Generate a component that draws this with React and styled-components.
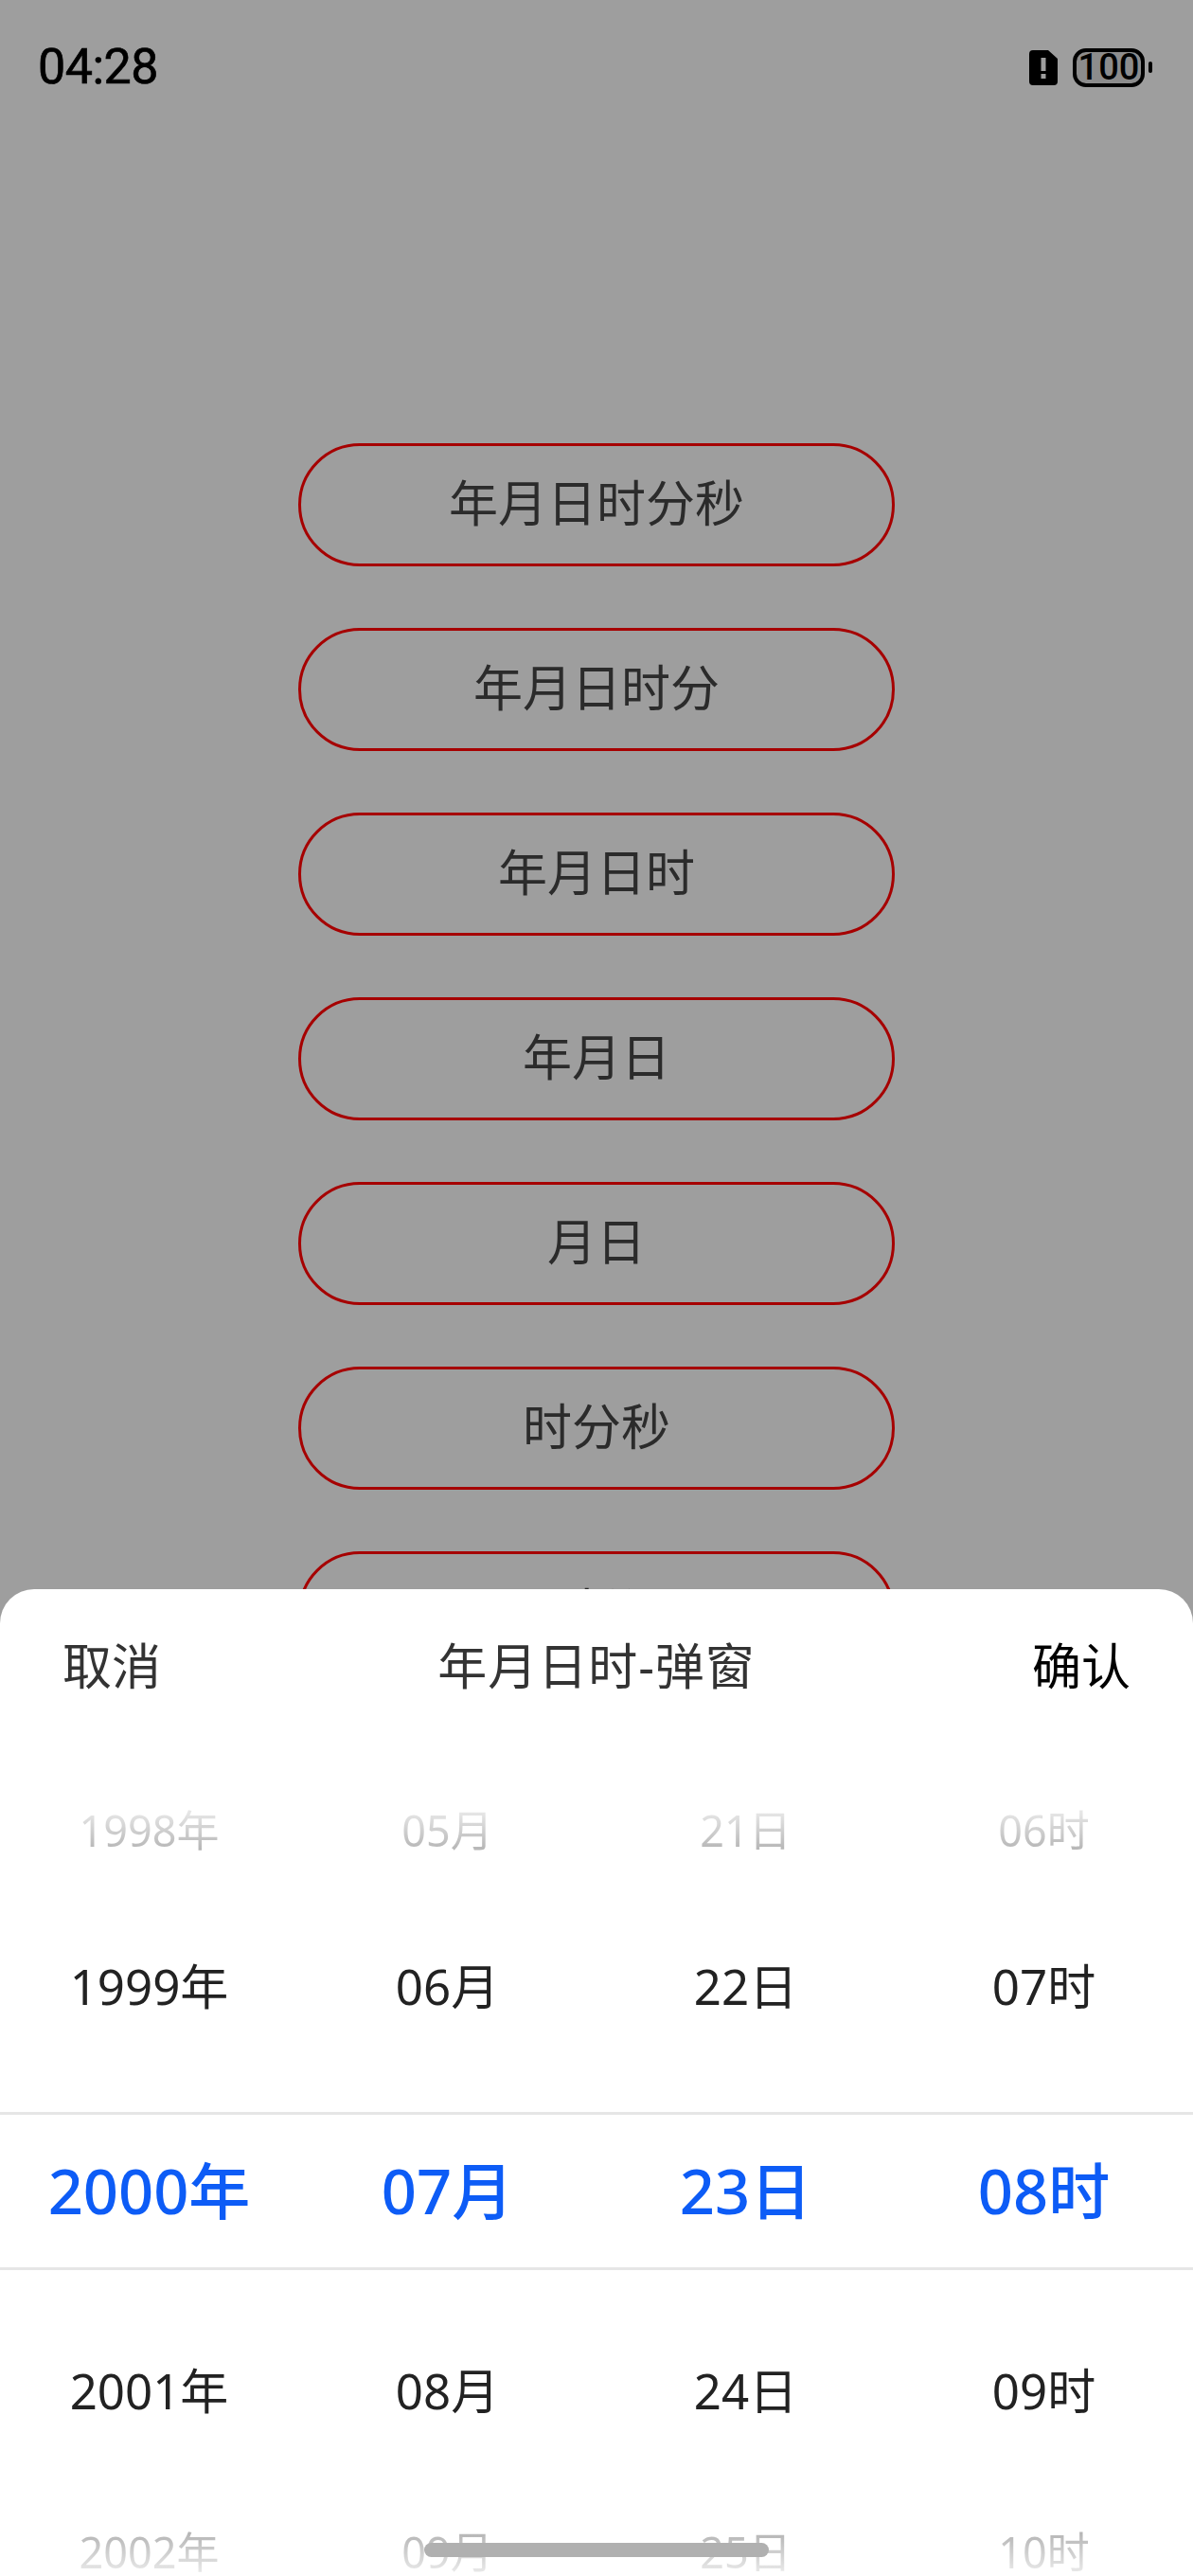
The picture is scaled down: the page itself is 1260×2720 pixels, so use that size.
import React from "react";
import styled, { createGlobalStyle } from "styled-components";

const GlobalStyle = createGlobalStyle`
  html, body {
    margin: 0;
    padding: 0;
    background: #9e9e9e;
  }
  * {
    box-sizing: border-box;
  }
`;

const FONT = `"Noto Sans", "Noto Sans CJK SC", sans-serif`;

const Page = styled.div`
  position: relative;
  width: 1260px;
  height: 2720px;
  overflow: hidden;
  background: #9e9e9e;
  font-family: ${FONT};
`;

const StatusBar = styled.div`
  display: flex;
  align-items: center;
  justify-content: space-between;
  height: 142px;
  padding: 0 43px 0 40px;
`;

const Clock = styled.div`
  font-family: Roboto, sans-serif;
  font-size: 52px;
  font-weight: 400;
  line-height: 1;
  letter-spacing: -0.5px;
  color: #000;
  -webkit-text-stroke: 0.7px #000;
`;

const StatusIcons = styled.div`
  display: flex;
  align-items: center;
  gap: 16px;
`;

const Battery = styled.div`
  display: flex;
  align-items: center;
  justify-content: center;
  width: 76px;
  height: 41px;
  border: 4px solid #000;
  border-radius: 14px;
  background: #8c8c8c;
  font-family: Roboto, sans-serif;
  font-size: 38px;
  font-weight: 500;
  line-height: 1;
  color: #000;
`;

const BatteryWrap = styled.div`
  display: flex;
  align-items: center;
  gap: 4px;
`;

const BatteryNub = styled.div`
  width: 4px;
  height: 12px;
  border-radius: 2px;
  background: #000;
`;

const ButtonList = styled.div`
  display: flex;
  flex-direction: column;
  align-items: center;
  gap: 65px;
  padding-top: 326px;
`;

const ModeButton = styled.div`
  display: flex;
  align-items: center;
  justify-content: center;
  flex: none;
  width: 630px;
  height: 130px;
  padding-bottom: 4px;
  border: 3px solid #a60000;
  border-radius: 65px;
  font-size: 52px;
  line-height: 1;
  color: #2b2b2b;
`;

const Sheet = styled.div`
  position: absolute;
  left: 0;
  right: 0;
  bottom: 0;
  height: 1042px;
  border-radius: 36px 36px 0 0;
  background: #fff;
`;

const SheetHeader = styled.div`
  display: flex;
  align-items: center;
  justify-content: space-between;
  height: 162px;
  padding: 0 66px;
  font-size: 52px;
  line-height: 1;
`;

const HeaderAction = styled.div`
  color: ${(p) => (p.$primary ? "#000" : "#333")};
`;

const HeaderTitle = styled.div`
  letter-spacing: 1px;
  color: #333;
`;

const Wheels = styled.div`
  display: grid;
  grid-template-columns: repeat(4, 1fr);
  padding-top: 10px;
`;

const Wheel = styled.div`
  display: flex;
  flex-direction: column;
`;

const Cell = styled.div`
  display: flex;
  align-items: center;
  justify-content: center;
  flex: none;
  height: 165px;
  padding-bottom: ${(p) => (p.$raised ? "10px" : "0")};
  line-height: 1;
  font-size: 51px;
  color: #222;

  ${(p) =>
    p.$selected &&
    `
    height: 167px;
    margin: 50px 0;
    border-top: 3px solid #e6e6e6;
    border-bottom: 3px solid #e6e6e6;
    font-size: 65px;
    font-weight: 500;
    color: #0d5cf6;
  `}
`;

const FadedText = styled.span`
  font-size: 45px;
  line-height: 1.2;
  color: transparent;
  background: linear-gradient(
    ${(p) => (p.$top ? "to bottom" : "to top")},
    #e6e6e6 15%,
    #b4b4b4 90%
  );
  -webkit-background-clip: text;
  background-clip: text;
`;

const HomeIndicator = styled.div`
  position: absolute;
  left: 448px;
  bottom: 20px;
  width: 364px;
  height: 15px;
  border-radius: 8px;
  background: #b0b0b0;
`;

const modes = ["年月日时分秒", "年月日时分", "年月日时", "年月日", "月日", "时分秒", "时分"];

const columns = [
  ["1998年", "1999年", "2000年", "2001年", "2002年"],
  ["05月", "06月", "07月", "08月", "09月"],
  ["21日", "22日", "23日", "24日", "25日"],
  ["06时", "07时", "08时", "09时", "10时"],
];

const SimIcon = () => (
  <svg width="30" height="37" viewBox="0 0 30 37">
    <path
      fillRule="evenodd"
      fill="#000"
      d="M4 0H20L30 9V33Q30 37 26 37H4Q0 37 0 33V4Q0 0 4 0ZM12.5 8V22H17.5V8ZM12.5 25V30H17.5V25Z"
    />
  </svg>
);

const App = () => {
  return (
    <Page>
      <GlobalStyle />
      <StatusBar>
        <Clock>04:28</Clock>
        <StatusIcons>
          <SimIcon />
          <BatteryWrap>
            <Battery>100</Battery>
            <BatteryNub />
          </BatteryWrap>
        </StatusIcons>
      </StatusBar>
      <ButtonList>
        {modes.map((mode) => (
          <ModeButton key={mode}>{mode}</ModeButton>
        ))}
      </ButtonList>
      <Sheet>
        <SheetHeader>
          <HeaderAction>取消</HeaderAction>
          <HeaderTitle>年月日时-弹窗</HeaderTitle>
          <HeaderAction $primary>确认</HeaderAction>
        </SheetHeader>
        <Wheels>
          {columns.map((items) => (
            <Wheel key={items[0]}>
              {items.map((item, i) => (
                <Cell key={item} $selected={i === 2} $raised={i === 3}>
                  {i === 0 || i === 4 ? <FadedText $top={i === 0}>{item}</FadedText> : item}
                </Cell>
              ))}
            </Wheel>
          ))}
        </Wheels>
      </Sheet>
      <HomeIndicator />
    </Page>
  );
};

export default App;
